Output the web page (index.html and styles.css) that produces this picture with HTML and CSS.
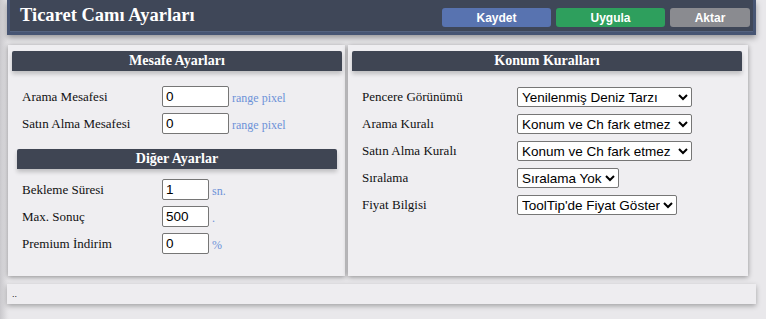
FILE: index.html
```html
<!DOCTYPE html>
<html>
<head>
	<meta charset='utf-8'>
	<title>Ticaret Camı Ayarları</title>
	<link rel="stylesheet" href="styles.css">
</head>
<body>
	<div id="window">
		<div class="topbar">
			<b class="title">Ticaret Camı Ayarları</b>
			<div class="buttons">
				<button class="btn save">Kaydet</button>
				<button class="btn apply">Uygula</button>
				<button class="btn export">Aktar</button>
			</div>
		</div>
		<div class="content">
			<div class="panel left">
				<div class="head">Mesafe Ayarları</div>
				<div class="rows">
					<div class="row"><span class="label">Arama Mesafesi</span><input class="num wide" type="text" value="0"><span class="unit">range pixel</span></div>
					<div class="row"><span class="label">Satın Alma Mesafesi</span><input class="num wide" type="text" value="0"><span class="unit">range pixel</span></div>
				</div>
				<div class="head sub">Diğer Ayarlar</div>
				<div class="rows other">
					<div class="row"><span class="label">Bekleme Süresi</span><input class="num" type="text" value="1"><span class="unit">sn.</span></div>
					<div class="row"><span class="label">Max. Sonuç</span><input class="num" type="text" value="500"><span class="unit">.</span></div>
					<div class="row"><span class="label">Premium İndirim</span><input class="num" type="text" value="0"><span class="unit">%</span></div>
				</div>
			</div>
			<div class="panel right">
				<div class="head">Konum Kuralları</div>
				<div class="rows">
					<div class="row"><span class="label">Pencere Görünümü</span>
						<select class="w175"><option>Yenilenmiş Deniz Tarzı</option><option>Klasik</option></select></div>
					<div class="row"><span class="label">Arama Kuralı</span>
						<select class="w175"><option>Konum ve Ch fark etmez</option></select></div>
					<div class="row"><span class="label">Satın Alma Kuralı</span>
						<select class="w175"><option>Konum ve Ch fark etmez</option></select></div>
					<div class="row"><span class="label">Sıralama</span>
						<select><option>Sıralama Yok</option></select></div>
					<div class="row"><span class="label">Fiyat Bilgisi</span>
						<select><option>ToolTip'de Fiyat Göster</option></select></div>
				</div>
			</div>
		</div>
		<div class="status">..</div>
	</div>
</body>
</html>
```

FILE: styles.css
```css
html, body {margin:0; padding:0;}
body {
	background: linear-gradient(to right, #c9c8cc 0px, #e4e3e6 7px, #e9e8eb 9px);
	height: 319px;
	overflow: hidden;
	font-family: "Liberation Serif", serif;
	font-size: 13px;
	color: #111;
}
div#window {
	margin-left: 7px;
	width: 749px;
}
div.topbar {
	height: 29px;
	background: #3f4758;
	border: 3px solid #475573;
	border-top: 0;
	box-shadow: inset 0 -1px 0 #55637f, 0 3px 6px rgba(0,0,0,0.35);
	display: flex;
	align-items: center;
	justify-content: space-between;
	padding: 0 0 3px 10px;
}
b.title {
	color: #fff;
	font-size: 18.5px;
	font-weight: bold;
	padding-top: 2px;
}
div.buttons {
	display: flex;
	gap: 5px;
	padding-top: 6px;
	margin-right: 3px;
}
.btn {
	border: 0;
	border-radius: 3px;
	height: 19px;
	width: 109px;
	color: #fff;
	font-family: "Liberation Sans", Arial, sans-serif;
	font-weight: bold;
	font-size: 12px;
	padding: 0;
}
.btn.save {background: #5873b0;}
.btn.apply {background: #2e9f5d;}
.btn.export {background: #8a8b90; width: 80px;}
div.content {
	display: flex;
	gap: 3px;
	margin-top: 10px;
	margin-left: 1px;
}
div.panel {
	background: #efeef1;
	box-shadow: 0 1px 5px rgba(0,0,0,0.4);
	height: 225px;
	padding-top: 6px;
	padding-left: 4px;
}
div.panel.left {width: 333px;}
div.panel.right {width: 396px;}
div.head {
	background: #3f4553;
	color: #fff;
	font-weight: bold;
	text-align: center;
	height: 20px;
	line-height: 20px;
	font-size: 14px;
	border-radius: 2px 2px 0 0;
	box-shadow: 0 3px 4px rgba(0,0,0,0.2);
}
div.panel.left > div.head {width: 330px;}
div.panel.right > div.head {width: 390px;}
div.panel.left > div.head.sub {
	width: 320px;
	margin: 15px 0 0 5px;
}
div.rows {
	display: flex;
	flex-direction: column;
	gap: 6px;
	margin-top: 15px;
	padding-left: 10px;
}
div.rows.other {margin-top: 10px;}
div.row {
	display: flex;
	align-items: center;
	height: 21px;
}
div.panel.right div.rows {gap: 7px; margin-top: 16px;}
div.panel.right div.row {height: 20px;}
span.label {width: 140px; flex: none;}
div.panel.right span.label {width: 155px;}
input.num {
	width: 39px;
	height: 15px;
	border: 1px solid #767676;
	border-radius: 2px;
	padding: 2px 3px;
	font-family: "Liberation Sans", Arial, sans-serif;
	font-size: 13.5px;
	margin: 0;
	background: #fff;
	color: #000;
}
input.num.wide {width: 59px;}
span.unit {
	color: #6d92d8;
	font-size: 12px;
	margin-left: 3px;
	padding-top: 3px;
}
select {
	height: 20px;
	border: 1px solid #767676;
	border-radius: 2px;
	background: #fff;
	font-family: "Liberation Sans", Arial, sans-serif;
	font-size: 13.5px;
	color: #000;
	margin: 0;
	padding: 0;
}
select.w175 {width: 175px;}
div.status {
	margin-top: 8px;
	height: 20px;
	background: #eeedf0;
	box-shadow: 0 2px 5px rgba(0,0,0,0.3);
	font-family: "Liberation Sans", Arial, sans-serif;
	font-size: 9px;
	line-height: 20px;
	padding-left: 5px;
}
```
